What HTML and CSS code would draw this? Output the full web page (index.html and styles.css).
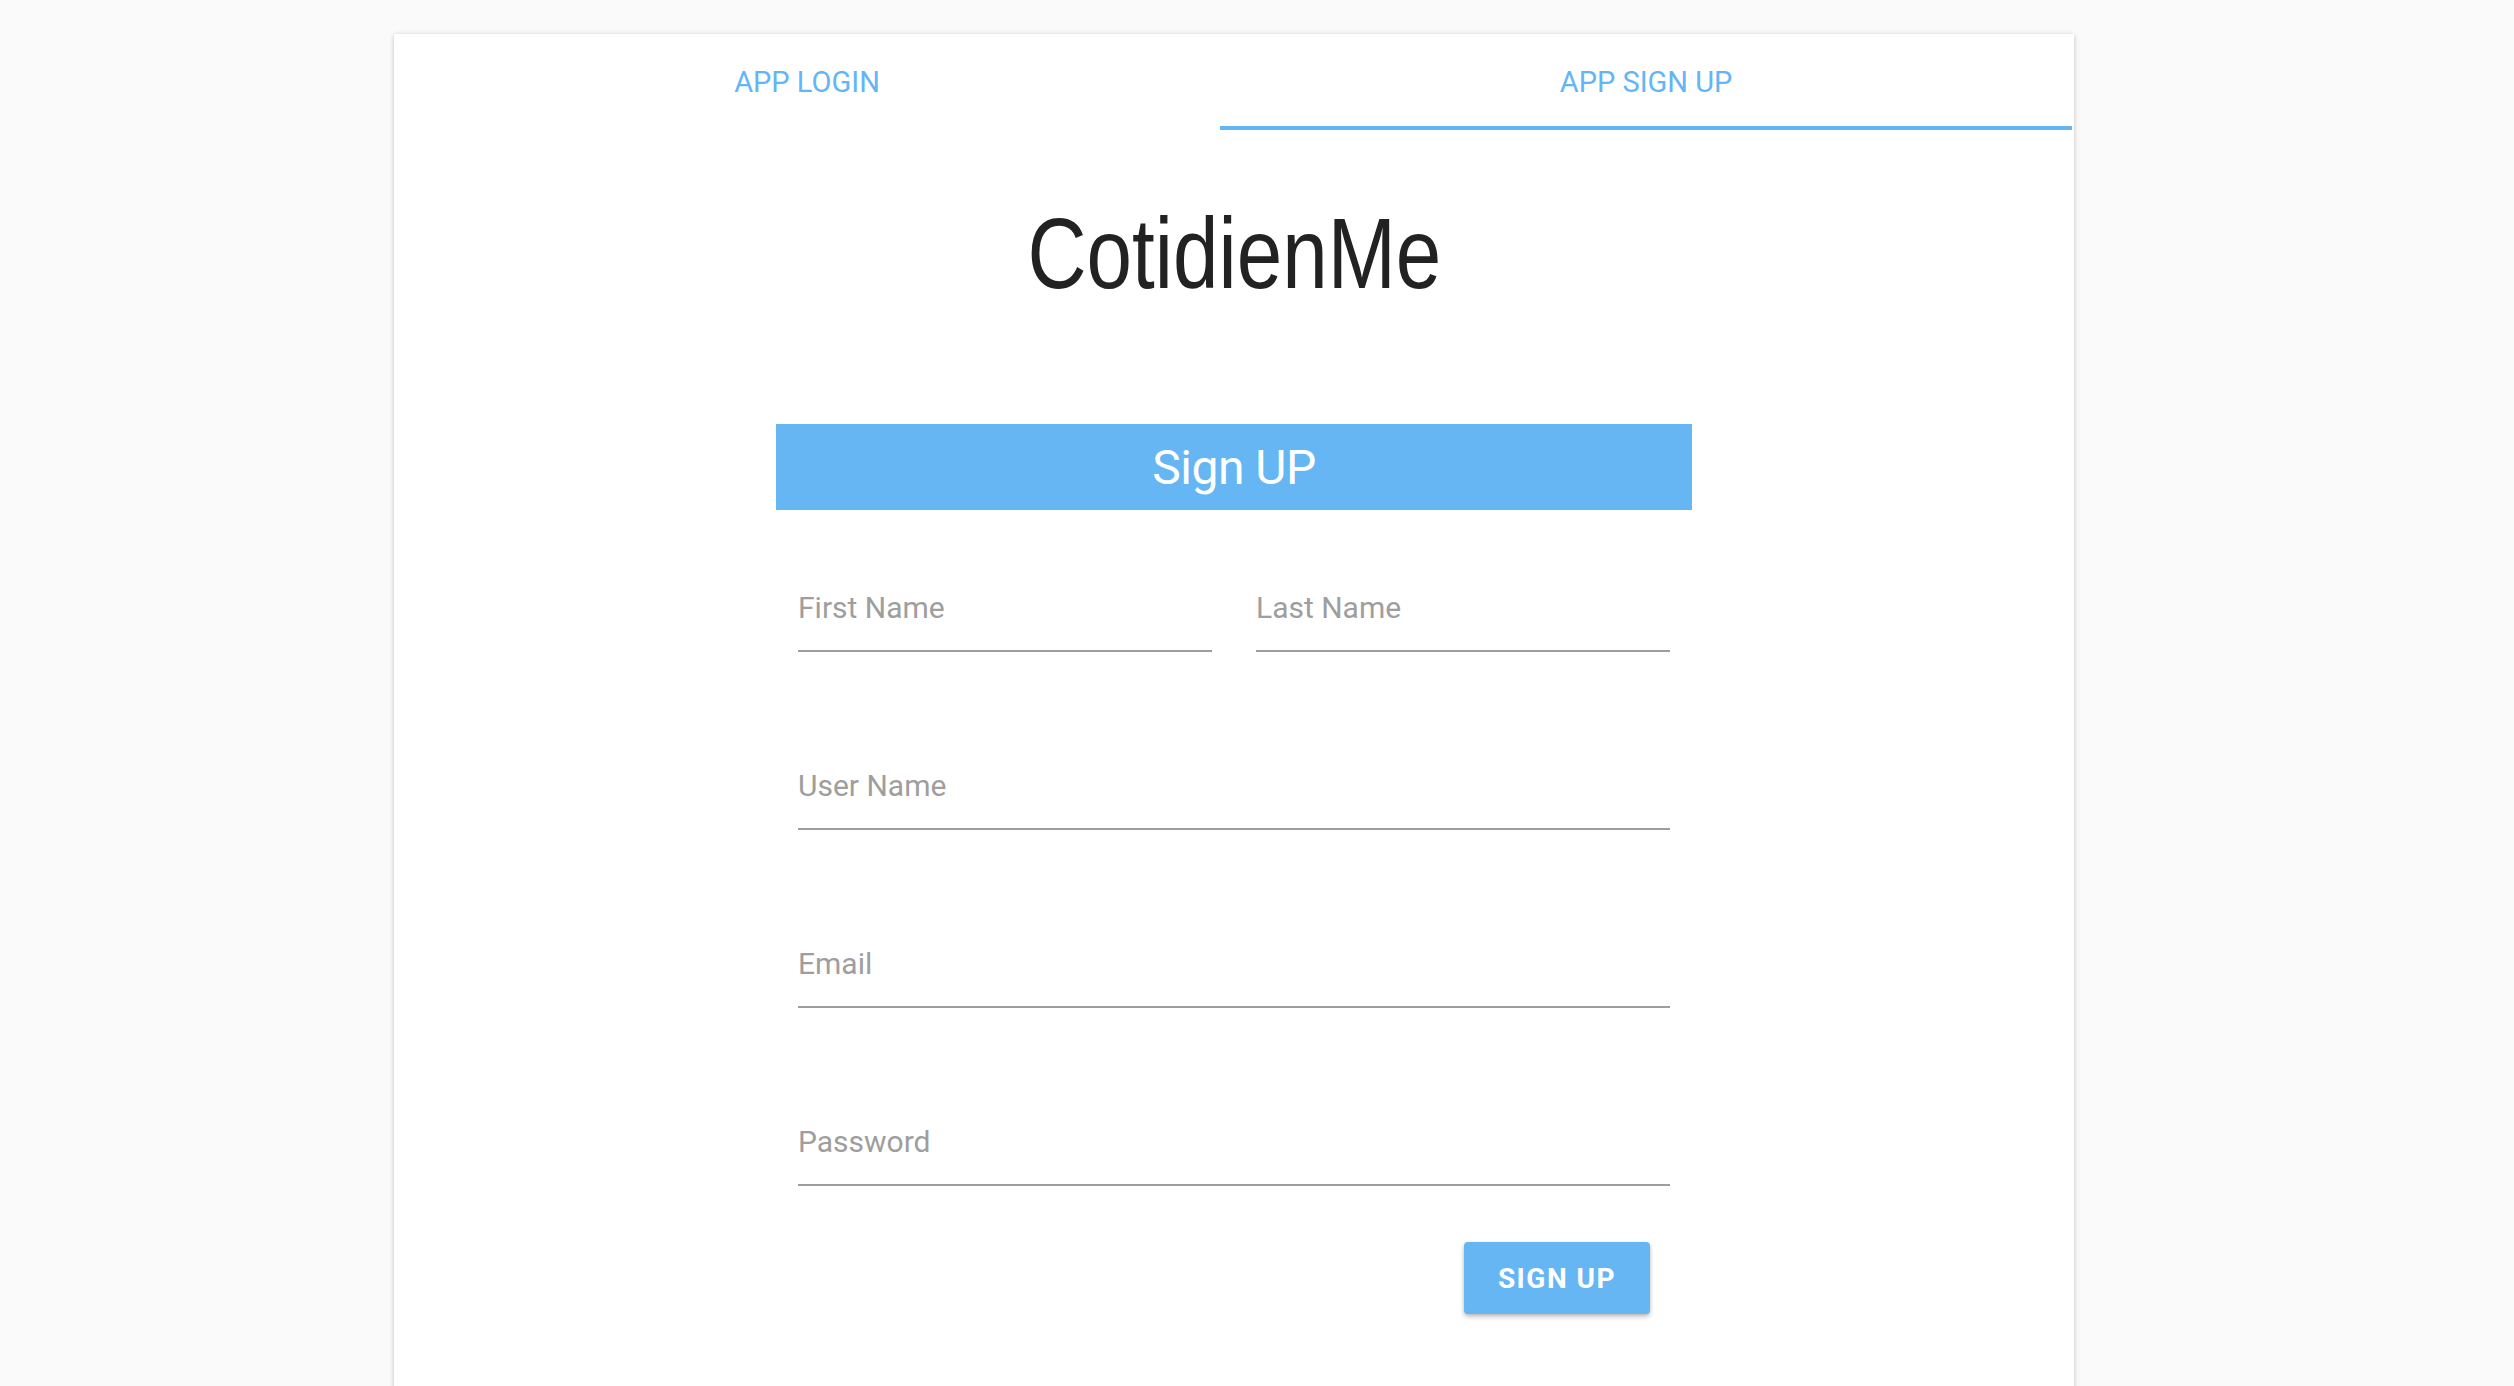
FILE: index.html
```html
<!DOCTYPE html>
<html lang="en">
<head>
<meta charset="utf-8">
<title>CotidienMe - Sign Up</title>
<link rel="stylesheet" href="styles.css">
</head>
<body>
  <div class="card">
    <nav class="tabs">
      <button class="tab tab-login">APP LOGIN</button>
      <button class="tab tab-signup active">APP SIGN UP</button>
    </nav>
    <h1 class="brand"><span class="brand-text">CotidienMe</span></h1>
    <section class="signup">
      <div class="signup-head">Sign UP</div>
      <form class="signup-form">
        <div class="row">
          <input class="field" type="text" placeholder="First Name">
          <input class="field" type="text" placeholder="Last Name">
        </div>
        <input class="field" type="text" placeholder="User Name">
        <input class="field" type="email" placeholder="Email">
        <input class="field" type="password" placeholder="Password">
        <div class="actions">
          <button class="submit" type="button">SIGN UP</button>
        </div>
      </form>
    </section>
  </div>
</body>
</html>
```

FILE: styles.css
```css
html, body {
  margin: 0;
  padding: 0;
  background: #fafafa;
  font-family: Roboto, "Liberation Sans", Arial, sans-serif;
  overflow: hidden;
}

.card {
  margin: 34px 0 0 394px;
  width: 1680px;
  min-height: 1420px;
  background: #fff;
  box-shadow: 0 1px 6px rgba(0, 0, 0, 0.12), 0 1px 4px rgba(0, 0, 0, 0.12);
  display: flex;
  flex-direction: column;
  align-items: stretch;
}

.tabs {
  display: flex;
  height: 96px;
}

.tab {
  border: none;
  background: transparent;
  font-family: Roboto, "Liberation Sans", sans-serif;
  font-size: 29px;
  font-weight: 400;
  color: #64b5f6;
  display: flex;
  align-items: center;
  justify-content: center;
  padding: 0;
  border-bottom: 4px solid transparent;
  padding-top: 4px;
  cursor: pointer;
}

.tab-login { flex: 0 0 826px; }
.tab-signup { flex: 0 0 852px; }

.tab.active {
  border-bottom-color: #64b5f6;
}

.brand {
  margin: 72px 0 0 0;
  text-align: center;
  font-family: "Liberation Sans", Arial, sans-serif;
  font-weight: 400;
  font-size: 101px;
  line-height: 102px;
  color: #222;
}

.brand-text {
  display: inline-block;
  transform: scaleX(0.81);
}

.signup {
  width: 916px;
  align-self: center;
  margin-top: 120px;
}

.signup-head {
  height: 86px;
  background: #67b6f4;
  color: #fff;
  display: flex;
  align-items: center;
  justify-content: center;
  font-family: Roboto, sans-serif;
  font-size: 48px;
  font-weight: 400;
  letter-spacing: -0.5px;
}

.signup-form {
  padding: 80px 22px 0;
  display: flex;
  flex-direction: column;
  gap: 116px;
}

.row {
  display: flex;
  gap: 44px;
}

.row .field {
  flex: 1 1 0;
  min-width: 0;
}

.field {
  box-sizing: content-box;
  height: 36px;
  line-height: 36px;
  padding: 0 0 24px 0;
  border: none;
  border-bottom: 2px solid #9e9e9e;
  outline: none;
  background: transparent;
  font-family: Roboto, sans-serif;
  font-size: 30px;
  color: #333;
}

.field::placeholder {
  color: #9e9e9e;
  opacity: 1;
}

.actions {
  display: flex;
  justify-content: flex-end;
  margin-top: -60px;
  padding-right: 20px;
}

.submit {
  width: 186px;
  height: 72px;
  border: none;
  border-radius: 4px;
  background: #67b6f4;
  color: #fff;
  font-family: Roboto, sans-serif;
  font-size: 28px;
  font-weight: 700;
  letter-spacing: 1.5px;
  box-shadow: 0 3px 5px rgba(0, 0, 0, 0.2), 0 1px 3px rgba(0, 0, 0, 0.12);
  cursor: pointer;
}
```
